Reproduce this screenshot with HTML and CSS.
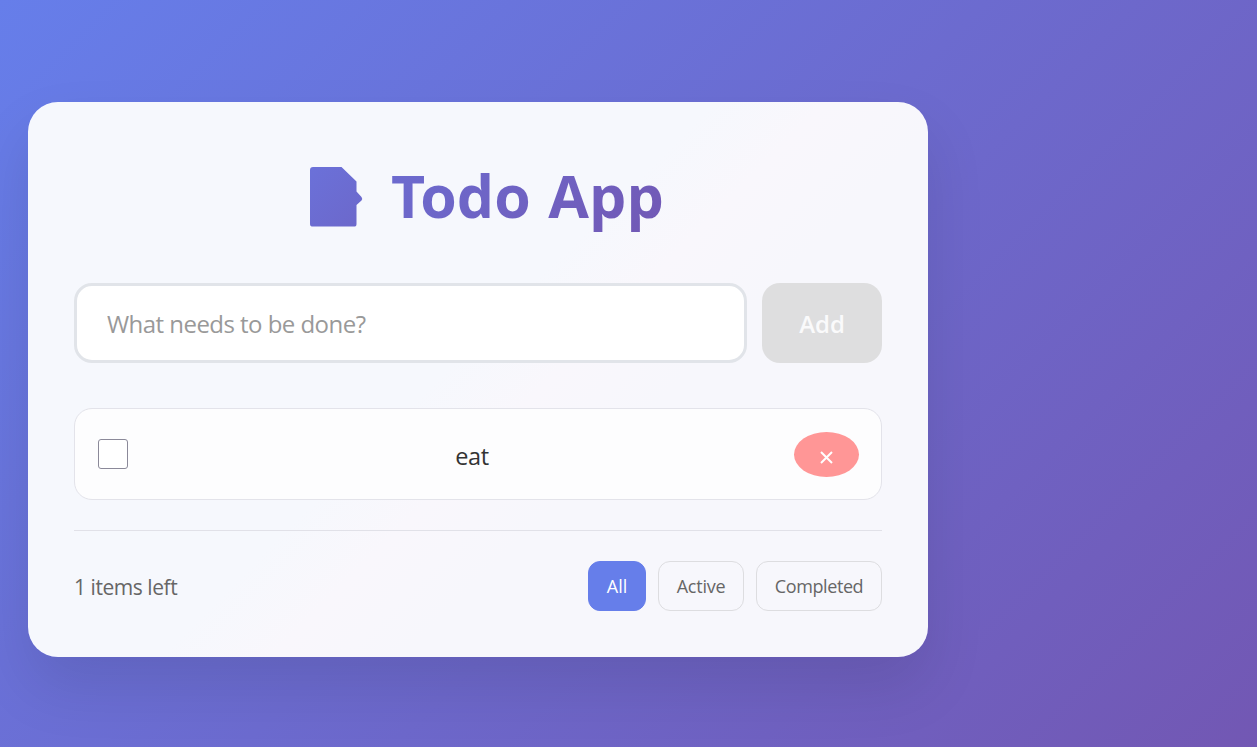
FILE: index.html
```html
<!DOCTYPE html>
<html lang="en">
<head>
<meta charset="utf-8">
<title>Todo App</title>
<link rel="stylesheet" href="styles.css">
</head>
<body>
<main class="card">
  <h1 class="title">
    <svg class="title-icon" width="53" height="60" viewBox="0 0 53 60" aria-hidden="true">
      <defs><linearGradient id="note" x1="0" y1="0" x2="53" y2="53" gradientUnits="userSpaceOnUse"><stop offset="0" stop-color="#6b71d9"/><stop offset="1" stop-color="#6c68cb"/></linearGradient></defs>
      <path fill="url(#note)" d="M3 0H31.5L46.5 14.5V24.5L51.5 30Q53 32 51.5 33.5L46.5 38V57Q46.5 59.6 44 59.6H3Q0 59.6 0 57V3Q0 0 3 0Z"/>
    </svg>
    <span class="title-text"><span class="title-cap">T</span>odo App</span>
  </h1>
  <form class="entry">
    <input class="entry-input" type="text" placeholder="What needs to be done?">
    <button class="entry-add" type="button" disabled>Add</button>
  </form>
  <div class="item">
    <span class="check"></span>
    <span class="item-text">eat</span>
    <button class="remove" type="button" aria-label="Remove"><svg width="13" height="13" viewBox="0 0 13 13"><path d="M1 1L12 12M12 1L1 12" stroke="#fff" stroke-width="2"/></svg></button>
  </div>
  <footer class="footer">
    <span class="count">1 items left</span>
    <div class="filters">
      <button class="filter all active" type="button">All</button>
      <button class="filter act" type="button">Active</button>
      <button class="filter comp" type="button">Completed</button>
    </div>
  </footer>
</main>
</body>
</html>
```

FILE: styles.css
```css
* { box-sizing: border-box; }
html { height: 100%; }
body {
  margin: 0;
  height: 747px;
  padding: 102px 0 0 28px;
  overflow: hidden;
  font-family: "Open Sans", "Noto Sans", sans-serif;
  background: linear-gradient(135deg, #667eea 0%, #764ba2 100%);
  background-size: 1640px 1000px;
}
button, input { font-family: inherit; margin: 0; }
.card {
  width: 900px;
  height: 555px;
  padding: 52px 46px 0;
  border-radius: 30px;
  background: linear-gradient(135deg, #f6f8fd 47%, #f9f7fc 55%, #f7f7fc 64%);
  box-shadow: 0 30px 60px rgba(0, 0, 0, 0.1);
}
.title {
  display: flex;
  height: 90px;
  margin: 0 0 39px;
  padding: 0 0 0 236px;
  font-size: 59px;
  font-weight: 700;
  line-height: 83px;
  color: transparent;
  background: linear-gradient(135deg, #667eea, #764ba2);
  background-clip: text;
  -webkit-background-clip: text;
}
.title-icon { flex: none; margin: 13px 28px 0 0; }
.title-text { white-space: nowrap; letter-spacing: 0.1px; word-spacing: 2px; }
.title-cap { letter-spacing: -5px; }
.entry { display: flex; gap: 15px; height: 80px; margin: 0 0 45px; }
.entry-input {
  width: 673px;
  padding: 0 30px 0 30px;
  border: 3px solid #e1e4e9;
  border-radius: 18px;
  background: #fff;
  font-size: 24px;
  letter-spacing: -0.54px;
}
.entry-input::placeholder { color: #999; }
.entry-add {
  width: 120px;
  padding: 1px 0 0;
  border: 0;
  border-radius: 18px;
  background: #dededf;
  color: #fafafb;
  font-size: 24px;
  font-weight: 600;
}
.item {
  display: flex;
  align-items: center;
  height: 92px;
  margin-bottom: 30px;
  padding: 0 22px 0 23px;
  border: 1px solid #e3e3ea;
  border-radius: 18px;
  background: #fdfdfe;
}
.check {
  width: 30px;
  height: 30px;
  border: 1px solid #8b8999;
  border-radius: 3px;
  background: #fff;
}
.item-text {
  flex: 1;
  padding: 3px 0 0 22px;
  text-align: center;
  font-size: 23.5px;
  letter-spacing: -0.3px;
  color: #333;
}
.remove {
  display: grid;
  place-items: center;
  width: 65px;
  height: 45px;
  padding: 6px 0 0;
  border: 0;
  border-radius: 50%;
  background: #ff9696;
}
.footer {
  display: flex;
  justify-content: space-between;
  align-items: center;
  height: 81px;
  padding-top: 30px;
  border-top: 1px solid #e1e1e8;
}
.count { padding: 2px 0 0; font-size: 21px; letter-spacing: -0.45px; color: #666; }
.filters { display: flex; gap: 12px; }
.filter {
  height: 50px;
  padding: 0;
  border: 1px solid #dddde0;
  border-radius: 12px;
  background: transparent;
  color: #666;
  font-size: 18px;
  letter-spacing: -0.4px;
}
.all { width: 58px; letter-spacing: 0; }
.act { width: 86px; letter-spacing: -0.25px; }
.comp { width: 126px; }
.active { border-color: #667eea; background: #667eea; color: #fff; }
```
